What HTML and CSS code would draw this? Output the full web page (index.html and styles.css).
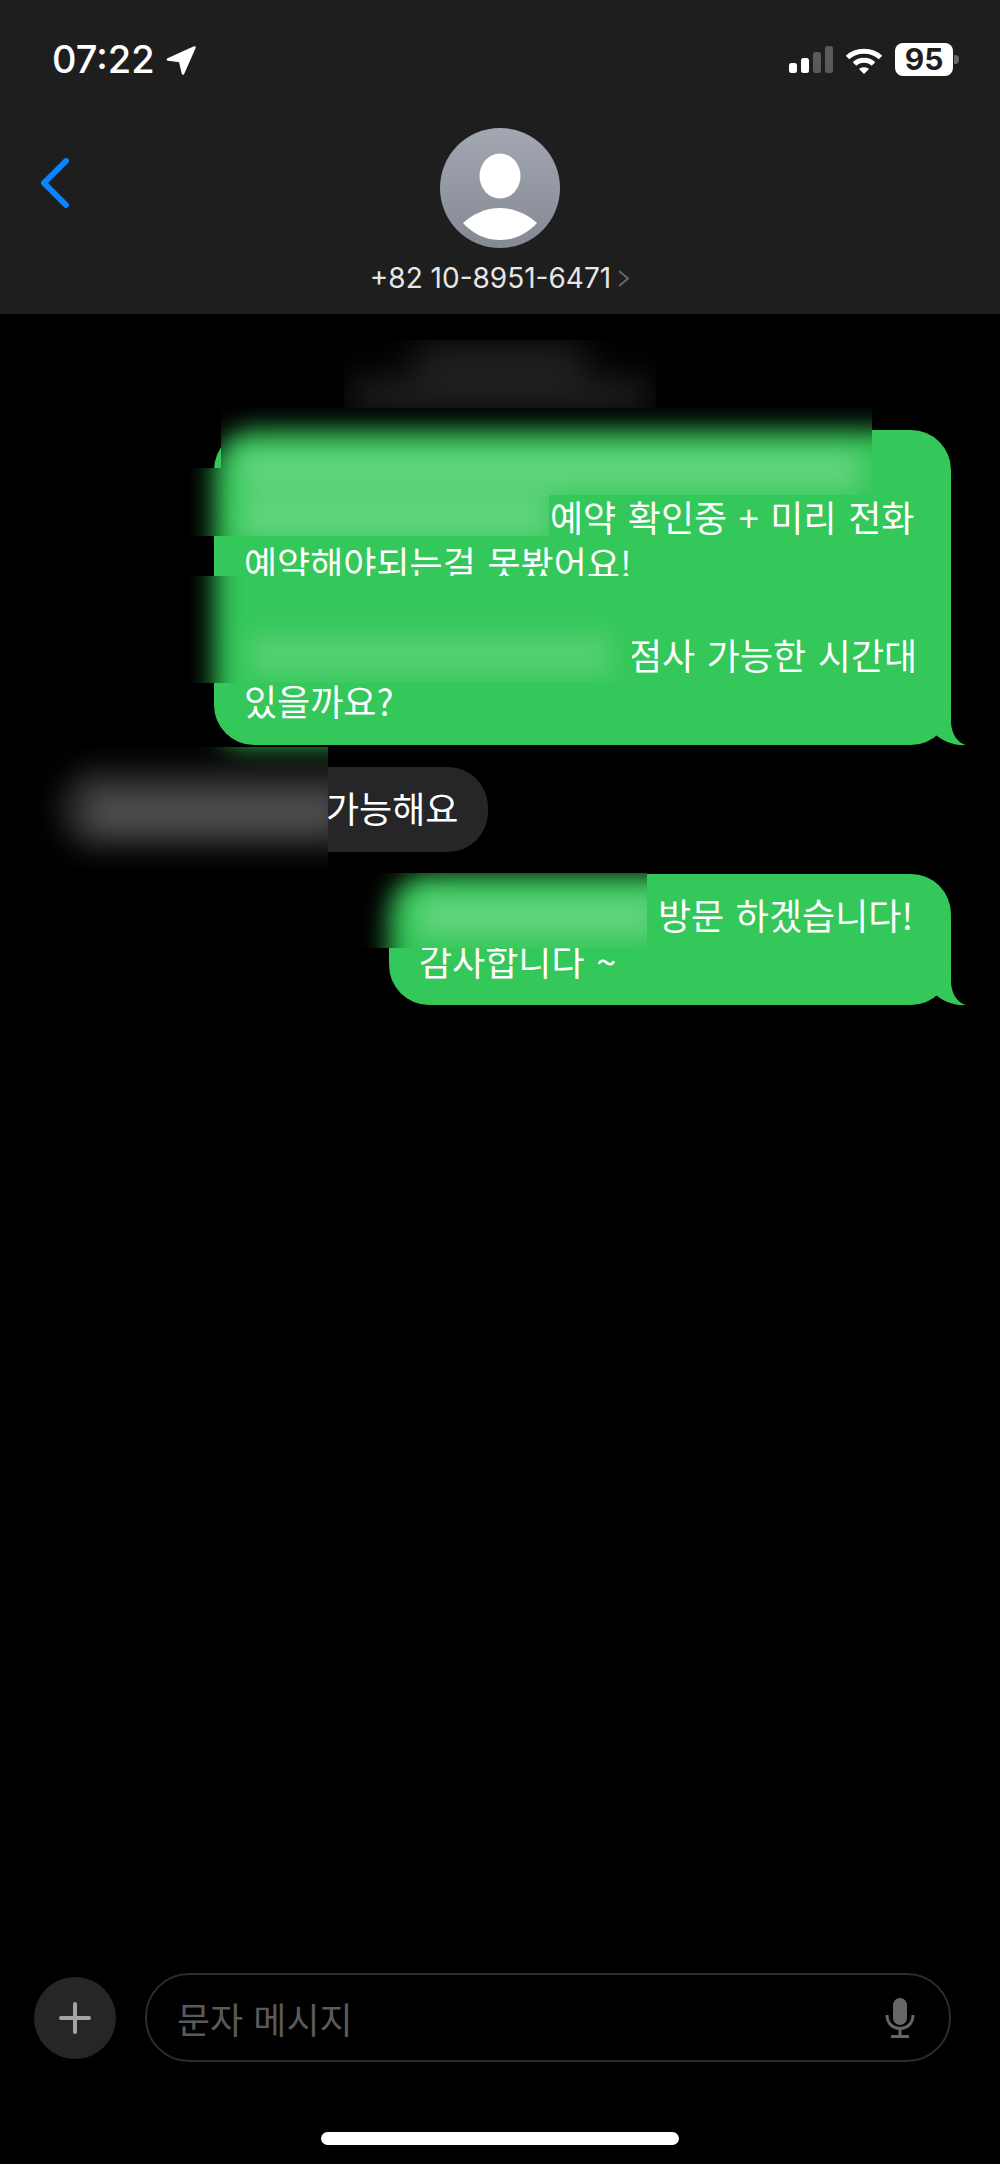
FILE: index.html
```html
<!DOCTYPE html>
<html lang="ko">
<head>
    <meta charset="UTF-8">
    <meta name="viewport" content="width=device-width, initial-scale=1.0">
    <title>Messages</title>
    <link rel="stylesheet" href="styles.css">
</head>
<body>
   <header class="top">
      <div class="status">
         <div class="status-left">
            <span class="clock">07:22</span>
            <svg class="arrow" viewBox="0 0 30 30"><path d="M28.500 1.500 L2 13.500 L14 15 L17 27.500 Z"/></svg>
         </div>
         <div class="status-right">
            <div class="signal">
               <span class="bar bar-1"></span>
               <span class="bar bar-2"></span>
               <span class="bar bar-3 off"></span>
               <span class="bar bar-4 off"></span>
            </div>
            <svg class="wifi" viewBox="0 0 38 26">
               <path class="wifi-arc" d="M2.500 9.500 C11 1 27 1 35.500 9.500"/>
               <path class="wifi-arc" d="M9.500 16 C14.500 11 23.500 11 28.500 16"/>
               <path d="M14 21 C17 18.500 21 18.500 24 21 L19 26 Z"/>
            </svg>
            <div class="battery">
               <span class="battery-level">95</span>
               <span class="battery-cap"></span>
            </div>
         </div>
      </div>
      <div class="nav">
         <svg class="back" viewBox="0 0 30 50"><path d="M26 3 L4 25 L26 47"/></svg>
         <div class="contact">
            <svg class="avatar" viewBox="0 0 120 120">
               <defs>
                  <linearGradient id="avatarFill" x1="0" y1="0" x2="0" y2="1">
                     <stop offset="0" stop-color="#a3a7b2"/>
                     <stop offset="1" stop-color="#858994"/>
                  </linearGradient>
               </defs>
               <circle cx="60" cy="60" r="60" fill="url(#avatarFill)"/>
               <ellipse cx="60" cy="48" rx="20.500" ry="22.500" fill="#fff"/>
               <path d="M23 95 C33 86 46 80 60 80 C74 80 87 86 97 95 C87 106 74 112 60 112 C46 112 33 106 23 95 Z" fill="#fff"/>
            </svg>
            <div class="number">
               <span>+82 10-8951-6471</span>
               <svg class="more" viewBox="0 0 13 17"><path d="M2 1 L11 8.500 L2 16"/></svg>
            </div>
         </div>
      </div>
   </header>

   <main class="thread">
      <div class="stamp">
         <div class="stamp-smear">
            <span class="stamp-line stamp-short"></span>
            <span class="stamp-line stamp-long"></span>
         </div>
      </div>

      <div class="bubble sent bubble-long">
         <p>
            <span class="line"></span>
            <span class="line"><span class="gap gap-b"></span>예약 확인중 + 미리 전화</span>
            <span class="line">예약해야되는걸 못봤어요!</span>
            <span class="line"></span>
            <span class="line"><span class="gap gap-c"></span>점사 가능한 시간대</span>
            <span class="line">있을까요?</span>
         </p>
         <svg class="tail" viewBox="0 0 40 40"><path d="M25 0 L25 18 C26 30 32 38 40 40 C30 41 18 37 10 30 L0 20 Z"/></svg>
         <div class="redact redact-top">
            <div class="smear">
               <div class="shape shape-long"></div>
               <div class="band band-a"></div>
               <div class="band band-b"></div>
            </div>
         </div>
         <div class="redact redact-mid">
            <div class="smear">
               <div class="shape shape-long"></div>
               <div class="band band-a"></div>
               <div class="band band-b"></div>
            </div>
         </div>
         <div class="redact redact-low">
            <div class="smear">
               <div class="shape shape-long"></div>
               <div class="band band-c"></div>
            </div>
         </div>
      </div>

      <div class="bubble received">
         <p><span class="line"><span class="gap gap-d"></span>가능해요</span></p>
         <div class="redact redact-reply">
            <div class="smear">
               <div class="shape shape-above"></div>
               <div class="shape shape-reply"></div>
               <div class="band band-d"></div>
            </div>
         </div>
      </div>

      <div class="bubble sent bubble-short">
         <p>
            <span class="line"><span class="gap gap-e"></span>방문 하겠습니다!</span>
            <span class="line">감사합니다 ~</span>
         </p>
         <svg class="tail" viewBox="0 0 40 40"><path d="M25 0 L25 18 C26 30 32 38 40 40 C30 41 18 37 10 30 L0 20 Z"/></svg>
         <div class="redact redact-last">
            <div class="smear">
               <div class="shape shape-short"></div>
               <div class="band band-e"></div>
            </div>
         </div>
      </div>
   </main>

   <footer class="composer">
      <button type="button" class="plus">
         <svg viewBox="0 0 32 32"><path d="M16 2 V30 M2 16 H30"/></svg>
      </button>
      <div class="field">
         <span class="placeholder">문자 메시지</span>
         <svg class="mic" viewBox="0 0 30 40">
            <rect class="mic-head" x="8" y="0" width="14" height="27" rx="7"/>
            <path d="M2 17 C2 35 28 35 28 17 M15 31 V38 M6 38.500 H24"/>
         </svg>
      </div>
   </footer>
   <div class="home-wrap"><div class="home"></div></div>
</body>
</html>
```

FILE: styles.css
```css
* {
    box-sizing: border-box;
}

body {
    margin: 0;
    width: 1000px;
    height: 2164px;
    background-color: #000;
    color: #fff;
    font-family: "Noto Sans CJK KR", "Inter", sans-serif;
    display: flex;
    flex-direction: column;
    overflow: hidden;
}

/* header */
.top {
    height: 314px;
    background-color: #1e1e1e;
    flex-shrink: 0;
}

.status {
    display: flex;
    justify-content: space-between;
    padding: 43px 41px 0 52px;
    height: 76px;
}

.status-left {
    display: flex;
    align-items: flex-start;
    gap: 11px;
}

.clock {
    font-family: "Inter", sans-serif;
    font-size: 38px;
    font-weight: 500;
    line-height: 33px;
}

.arrow {
    width: 30px;
    height: 30px;
    margin-top: 3px;
    fill: #fff;
    stroke: #fff;
    stroke-width: 2.5px;
    stroke-linejoin: round;
}

.status-right {
    display: flex;
    align-items: flex-start;
}

.signal {
    display: flex;
    align-items: flex-end;
    gap: 4px;
    height: 27px;
    margin-top: 3px;
    margin-right: 12px;
    margin-left: 1px;
}

.bar {
    width: 8px;
    background-color: #fff;
    border-radius: 2.5px;
}

.bar-1 { height: 10px; }
.bar-2 { height: 15px; }
.bar-3 { height: 21px; }
.bar-4 { height: 27px; }

.bar.off {
    background-color: #5a5a5a;
}

.wifi {
    width: 38px;
    height: 26px;
    margin-top: 5px;
    margin-right: 12px;
    fill: #fff;
}

.wifi-arc {
    fill: none;
    stroke: #fff;
    stroke-width: 5px;
}

.battery {
    display: flex;
    align-items: center;
    gap: 1px;
}

.battery-level {
    width: 58px;
    height: 33px;
    background-color: #fff;
    border-radius: 8px;
    color: #1e1e1e;
    font-family: "Inter", sans-serif;
    font-size: 30px;
    font-weight: 700;
    line-height: 33px;
    text-align: center;
}

.battery-cap {
    width: 5px;
    height: 9px;
    background-color: #6a6a6a;
    border-radius: 0 4px 4px 0;
}

.nav {
    display: grid;
    grid-template-columns: 1fr auto 1fr;
    padding-top: 52px;
}

.back {
    width: 30px;
    height: 50px;
    margin: 30px 0 0 40px;
    fill: none;
    stroke: #0a84ff;
    stroke-width: 6px;
    stroke-linecap: round;
    stroke-linejoin: round;
}

.contact {
    grid-column: 2;
    display: flex;
    flex-direction: column;
    align-items: center;
}

.avatar {
    width: 120px;
    height: 120px;
    display: block;
}

.number {
    display: flex;
    align-items: center;
    gap: 6px;
    margin-top: 14px;
    font-family: "Inter", sans-serif;
    font-size: 28px;
    line-height: 32px;
    color: #e6e6e6;
    white-space: nowrap;
}

.more {
    width: 13px;
    height: 17px;
    fill: none;
    stroke: #666;
    stroke-width: 2px;
}

/* messages */
.thread {
    flex: 1;
    display: flex;
    flex-direction: column;
    gap: 22px;
    padding-top: 26px;
}

.stamp {
    align-self: center;
    width: 312px;
    height: 68px;
    overflow: hidden;
}

.stamp-smear {
    display: flex;
    flex-direction: column;
    align-items: center;
    gap: 8px;
    padding-top: 6px;
    filter: blur(18px);
}

.stamp-line {
    display: block;
    height: 28px;
    background-color: #282828;
}

.stamp-short { width: 170px; }
.stamp-long { width: 300px; }

.bubble {
    position: relative;
    border-radius: 40px;
    font-size: 36px;
    line-height: 46px;
    word-spacing: 1.5px;
}

.bubble p {
    margin: 0;
    padding: 17px 0 22px 30px;
}

.line {
    display: block;
    height: 46px;
    white-space: nowrap;
}

.gap {
    display: inline-block;
}

.gap-b { width: 306px; }
.gap-c { width: 385px; }
.gap-d { width: 238px; }
.gap-e { width: 239px; }

.sent {
    align-self: flex-end;
    margin-right: 49px;
    background-color: #34c759;
}

.bubble-long { width: 737px; }
.bubble-short { width: 562px; }

.received {
    align-self: flex-start;
    margin-left: 58px;
    width: 430px;
    background-color: #262628;
}

.tail {
    position: absolute;
    right: -15px;
    bottom: 0;
    width: 40px;
    height: 40px;
    overflow: visible;
    fill: #34c759;
}

/* blurred-out parts: clipped patches lying over the bubbles */
.redact {
    position: absolute;
    overflow: hidden;
    background-color: #000;
}

.redact-top { left: 7px; top: -22px; width: 651px; height: 87px; }
.redact-mid { left: -24px; top: 38px; width: 359px; height: 68px; }
.redact-low { left: -24px; top: 146px; width: 442px; height: 107px; }
.redact-reply { left: -26px; top: -20px; width: 296px; height: 121px; }
.redact-last { left: -32px; top: -1px; width: 290px; height: 75px; }

.smear {
    position: absolute;
    inset: 0;
    filter: blur(13px);
}

.shape {
    position: absolute;
    border-radius: 40px;
    background-color: #34c759;
}

.shape-long { width: 737px; height: 315px; }
.redact-top .shape-long { left: -7px; top: 22px; }
.redact-mid .shape-long { left: 24px; top: -38px; }
.redact-low .shape-long { left: 24px; top: -146px; }

.shape-short { left: 32px; top: 1px; width: 562px; height: 131px; }

.shape-reply {
    left: 26px;
    top: 20px;
    width: 430px;
    height: 84px;
    background-color: #262628;
}

.shape-above { left: 182px; top: -60px; width: 736px; height: 58px; }

.band {
    position: absolute;
    height: 40px;
    background-color: rgba(255, 255, 255, 0.23);
}

.band-a { width: 620px; }
.band-b { width: 310px; }
.redact-top .band-a { left: 19px; top: 43px; }
.redact-top .band-b { left: 19px; top: 89px; }
.redact-mid .band-a { left: 50px; top: -17px; }
.redact-mid .band-b { left: 50px; top: 29px; }

.band-c { left: 60px; top: 59px; width: 360px; background-color: rgba(255, 255, 255, 0.17); }
.band-d { left: 56px; top: 45px; width: 250px; background-color: rgba(255, 255, 255, 0.19); }
.band-e { left: 61px; top: 23px; width: 240px; }

/* input row */
.composer {
    display: flex;
    align-items: center;
    gap: 29px;
    padding-left: 34px;
    margin-bottom: 70px;
}

.plus {
    width: 82px;
    height: 82px;
    padding: 0;
    border: none;
    border-radius: 50%;
    background-color: #262628;
    display: flex;
    align-items: center;
    justify-content: center;
}

.plus svg {
    width: 32px;
    height: 32px;
    fill: none;
    stroke: #a4a4a4;
    stroke-width: 4px;
    stroke-linecap: round;
}

.field {
    width: 806px;
    height: 89px;
    border: 2px solid #2c2c2e;
    border-radius: 44px;
    display: flex;
    align-items: center;
    justify-content: space-between;
    padding: 0 34px 0 30px;
}

.placeholder {
    font-size: 36px;
    color: #5a5a5a;
}

.mic {
    width: 30px;
    height: 40px;
    fill: none;
    stroke: #666;
    stroke-width: 3px;
}

.mic-head {
    fill: #666;
    stroke: none;
}

.home-wrap {
    height: 32px;
    display: flex;
    justify-content: center;
}

.home {
    width: 358px;
    height: 13px;
    background-color: #fff;
    border-radius: 7px;
}
```
